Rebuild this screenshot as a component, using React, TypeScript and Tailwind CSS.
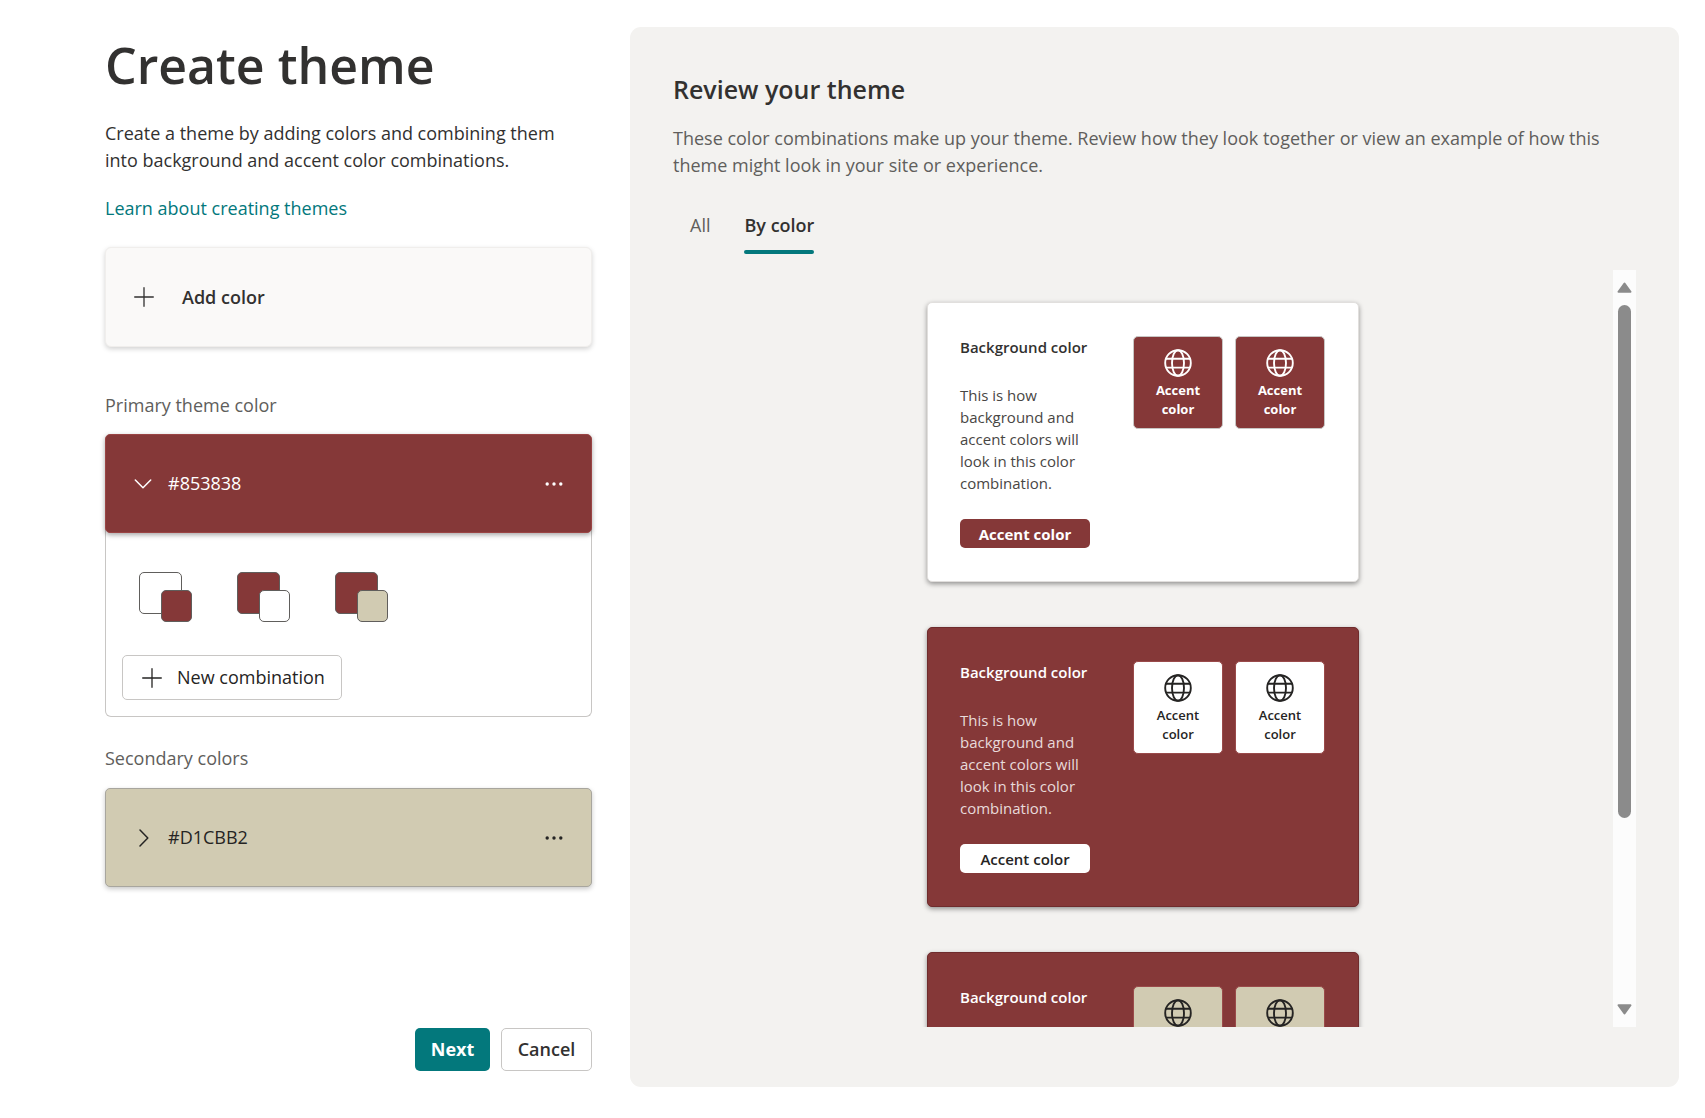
import React, { useState } from "react";

function PlusIcon() {
  return (
    <svg viewBox="0 0 20 20" className="size-5 shrink-0" fill="none" stroke="currentColor" strokeWidth="1.3" strokeLinecap="round" aria-hidden="true">
      <path d="M10 0.7V19.3M0.7 10H19.3" />
    </svg>
  );
}

function ChevronIcon({ open }: { open: boolean }) {
  return (
    <svg viewBox="0 0 18 18" className="size-[18px] shrink-0" fill="none" stroke="currentColor" strokeWidth="1.5" strokeLinecap="round" strokeLinejoin="round" aria-hidden="true">
      {open ? <path d="M1.3 5L9 12.8L16.7 5" /> : <path d="M6 1L13.8 9L6 17" />}
    </svg>
  );
}

function MoreIcon() {
  return (
    <svg viewBox="0 0 18 4" className="h-1 w-[18px]" fill="currentColor" aria-hidden="true">
      <circle cx="2.2" cy="2" r="1.7" />
      <circle cx="9" cy="2" r="1.7" />
      <circle cx="15.8" cy="2" r="1.7" />
    </svg>
  );
}

function GlobeIcon() {
  return (
    <svg viewBox="0 0 28 28" className="size-7" fill="none" stroke="currentColor" strokeWidth="1.9" aria-hidden="true">
      <circle cx="14" cy="14" r="12.8" />
      <ellipse cx="14" cy="14" rx="6" ry="12.8" />
      <path d="M2 9.8H26M2 18.6H26" />
    </svg>
  );
}

function Swatch({ back, front, label }: { back: string; front: string; label: string }) {
  return (
    <button type="button" aria-label={label} className="relative flex h-[50px] w-[53px] items-start">
      <span className={`block h-[42px] w-[43px] rounded-[5px] border border-[#605e5c] ${back}`} />
      <span className={`absolute right-0 bottom-0 h-8 w-[31px] rounded-[5px] border border-[#605e5c] ${front}`} />
    </button>
  );
}

type Combo = { card: string; heading: string; body: string; tile: string; accent: string };

const combos: Combo[] = [
  {
    card: "bg-white border-[#e1dfdd]",
    heading: "text-[#323130]",
    body: "text-[#484644]",
    tile: "bg-[#853838] text-white border-[#c8c6c4] font-bold",
    accent: "bg-[#853838] text-white font-bold",
  },
  {
    card: "bg-[#853838] border-[#6f2c2d]",
    heading: "text-white",
    body: "text-[#e8dada]",
    tile: "bg-white text-[#252423] border-[#9a4a4a] font-semibold",
    accent: "bg-white text-[#252423] font-semibold",
  },
  {
    card: "bg-[#853838] border-[#6f2c2d]",
    heading: "text-white",
    body: "text-[#e8dada]",
    tile: "bg-[#d1cbb2] text-[#252423] border-[#9a4a4a] font-semibold",
    accent: "bg-[#d1cbb2] text-[#252423] font-semibold",
  },
];

function AccentTile({ style }: { style: string }) {
  return (
    <div className={`flex h-[93px] w-[90px] flex-col items-center rounded-[5px] border pt-3 text-center text-[13px] leading-[19px] ${style}`}>
      <GlobeIcon />
      <span className="mt-1 w-14">Accent color</span>
    </div>
  );
}

function ComboCard({ combo }: { combo: Combo }) {
  return (
    <article className={`flex w-[432px] shrink-0 justify-between rounded-[5px] border py-[33px] pr-[33px] pl-8 shadow-[0_2px_5px_rgba(0,0,0,0.4)] ${combo.card}`}>
      <div className="flex w-[130px] flex-col">
        <h3 className={`text-[15px] leading-[22px] font-semibold whitespace-nowrap ${combo.heading}`}>Background color</h3>
        <p className={`mt-[26px] text-[15px] leading-[22px] ${combo.body}`}>
          This is how background and accent colors will look in this color combination.
        </p>
        <button type="button" className={`mt-[25px] h-[29px] rounded-[5px] text-[15px] leading-[22px] whitespace-nowrap ${combo.accent}`}>
          Accent color
        </button>
      </div>
      <div className="flex gap-3">
        <AccentTile style={combo.tile} />
        <AccentTile style={combo.tile} />
      </div>
    </article>
  );
}

export default function App() {
  const [open, setOpen] = useState(true);
  const [tab, setTab] = useState("By color");

  return (
    <main className="grid h-screen grid-cols-[487fr_1049fr] gap-[38px] bg-white pt-[27px] pr-[26px] pb-[31px] pl-[105px] font-['Open_Sans','Noto_Sans',sans-serif] text-[18px] leading-[27px] text-[#323130]">
      <section className="flex min-h-0 flex-col pb-4">
        <h1 className="text-[50px] leading-[76px] font-semibold whitespace-nowrap">Create theme</h1>
        <p className="mt-[17px]">Create a theme by adding colors and combining them into background and accent color combinations.</p>
        <a href="#learn" className="mt-[21px] self-start text-[#03787c]">Learn about creating themes</a>

        <button type="button" className="mt-[25px] flex h-[100px] shrink-0 items-center gap-7 rounded-md border border-[#f0eeec] bg-[#faf9f8] pl-7 font-semibold shadow-[0_2px_5px_rgba(0,0,0,0.18)]">
          <PlusIcon />
          Add color
        </button>

        <h2 className="mt-[45px] text-[#605e5c]">Primary theme color</h2>
        <div className="relative mt-[15px] flex h-[99px] shrink-0 items-center justify-between rounded-[5px] border border-[#9a4444] bg-[#853838] pr-7 pl-7 text-white shadow-[0_2px_5px_rgba(0,0,0,0.35)]">
          <button type="button" aria-expanded={open} onClick={() => setOpen(!open)} className="flex items-center gap-4">
            <ChevronIcon open={open} />
            #853838
          </button>
          <button type="button" aria-label="More options for #853838">
            <MoreIcon />
          </button>
        </div>
        {open && (
          <div className="-mt-1 rounded-b-md border border-t-0 border-[#c8c6c4] px-4 pt-[43px] pb-4">
            <div className="flex gap-[45px] pl-[17px]">
              <Swatch back="bg-white" front="bg-[#853838]" label="White with #853838" />
              <Swatch back="bg-[#853838]" front="bg-white" label="#853838 with white" />
              <Swatch back="bg-[#853838]" front="bg-[#d1cbb2]" label="#853838 with #D1CBB2" />
            </div>
            <button type="button" className="mt-[33px] flex h-[45px] w-[220px] items-center gap-[15px] rounded-[5px] border border-[#c8c6c4] pl-[19px] whitespace-nowrap text-[#252423]">
              <PlusIcon />
              New combination
            </button>
          </div>
        )}

        <h2 className="mt-7 text-[#605e5c]">Secondary colors</h2>
        <div className="mt-4 flex h-[99px] shrink-0 items-center justify-between rounded-[5px] border border-[#a8a69e] bg-[#d1cbb2] pr-7 pl-7 text-[#252423] shadow-[0_2px_5px_rgba(0,0,0,0.22)]">
          <button type="button" aria-expanded={false} className="flex items-center gap-4">
            <ChevronIcon open={false} />
            #D1CBB2
          </button>
          <button type="button" aria-label="More options for #D1CBB2">
            <MoreIcon />
          </button>
        </div>

        <div className="mt-auto flex justify-end gap-[11px]">
          <button type="button" className="h-[43px] w-[75px] rounded-[5px] bg-[#03787c] font-bold text-white">Next</button>
          <button type="button" className="h-[43px] w-[91px] rounded-[5px] border border-[#c8c6c4] font-semibold">Cancel</button>
        </div>
      </section>

      <section className="flex min-h-0 flex-col rounded-[11px] bg-[#f3f2f0] px-[43px] pt-[43px] pb-[60px]">
        <h2 className="text-[25px] leading-[38px] font-semibold">Review your theme</h2>
        <p className="mt-[17px] text-[#605e5c]">
          These color combinations make up your theme. Review how they look together or view an example of how this theme might look in your site or experience.
        </p>
        <div role="tablist" className="mt-[33px] flex gap-[34px] pl-[17px]">
          {["All", "By color"].map((name) => (
            <button
              key={name}
              type="button"
              role="tab"
              aria-selected={tab === name}
              onClick={() => setTab(name)}
              className={`flex flex-col gap-[11px] ${tab === name ? "font-semibold" : "text-[#605e5c]"}`}
            >
              {name}
              <span className={`h-1 w-full rounded-sm ${tab === name ? "bg-[#03787c]" : ""}`} />
            </button>
          ))}
        </div>

        <div className="mt-4 flex min-h-0 flex-1">
          <div className="flex flex-1 flex-col items-center gap-[45px] overflow-y-auto pt-8 [scrollbar-width:none]">
            {combos.map((combo, i) => (
              <ComboCard key={i} combo={combo} />
            ))}
          </div>
          <div aria-hidden="true" className="flex w-[23px] flex-col items-center bg-[#fcfcfc] py-3 text-[#8b8b8b]">
            <svg viewBox="0 0 15 11" className="h-[11px] w-[15px] shrink-0" fill="currentColor" stroke="currentColor" strokeWidth="2" strokeLinejoin="round">
              <path d="M7.5 1.5L13.5 9.8H1.5Z" />
            </svg>
            <div className="mt-3 mb-auto h-[70%] w-[13px] rounded-full bg-[#8b8b8b]" />
            <svg viewBox="0 0 15 11" className="h-[11px] w-[15px] shrink-0" fill="currentColor" stroke="currentColor" strokeWidth="2" strokeLinejoin="round">
              <path d="M7.5 9.5L13.5 1.2H1.5Z" />
            </svg>
          </div>
        </div>
      </section>
    </main>
  );
}
